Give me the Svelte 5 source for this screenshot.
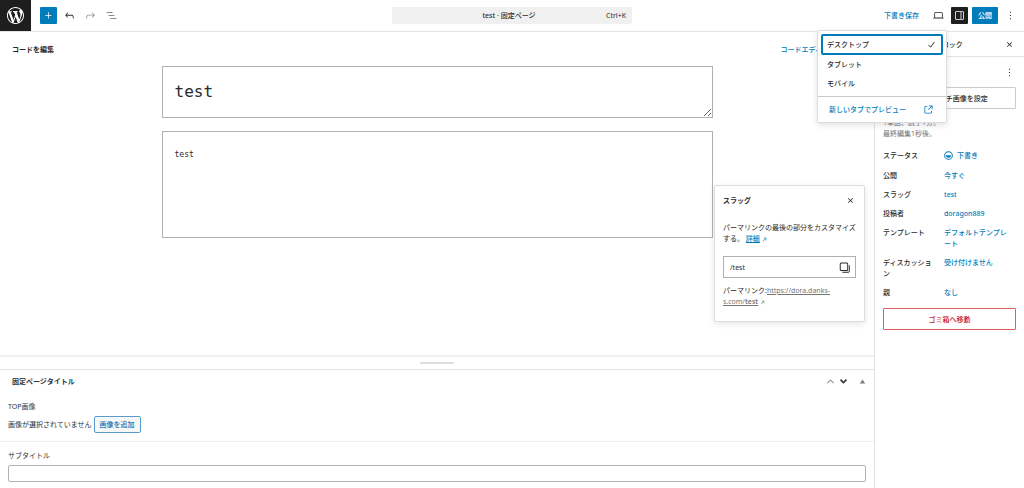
<script lang="ts">
  const icons = {
    plus: 'M11 12.5V17.5H12.5V12.5H17.5V11H12.5V6H11V11H6V12.5H11Z',
    undo: 'M18.3 11.7c-.6-.6-1.4-.9-2.3-.9H6.7l2.9-3.3-1.1-1-4.5 5L8.5 16l1-1-2.7-2.7H16c.5 0 .9.2 1.3.5 1 1 1 3.4 1 4.5v.3h1.5v-.2c0-1.5 0-4.3-1.5-5.7z',
    redo: 'M15.6 6.5l-1.1 1 2.9 3.3H8c-.9 0-1.7.3-2.3.9-1.4 1.5-1.4 4.2-1.4 5.6v.2h1.5v-.3c0-1.1 0-3.5 1-4.5.3-.3.7-.5 1.3-.5h9.2L14.5 15l1.1 1.1 4.6-4.6-4.6-5z',
    list: 'M3 6h11v1.5H3V6Zm3.5 5.5h11V13h-11v-1.5ZM21 17H10v1.5h11V17Z',
    laptop: 'M20.5 16h-.7V8c0-1.1-.9-2-2-2H6.2c-1.1 0-2 .9-2 2v8h-.7c-.8 0-1.5.7-1.5 1.5h20c0-.8-.7-1.5-1.5-1.5zM5.7 8c0-.3.2-.5.5-.5h11.6c.3 0 .5.2.5.5v7.6H5.7V8z',
    drawer: 'M18 4H6c-1.1 0-2 .9-2 2v12c0 1.1.9 2 2 2h12c1.1 0 2-.9 2-2V6c0-1.1-.9-2-2-2zm-4 14.5H6c-.3 0-.5-.2-.5-.5V6c0-.3.2-.5.5-.5h8v13zm4.5-.5c0 .3-.2.5-.5.5h-2.5v-13H18c.3 0 .5.2.5.5v12z',
    more: 'M13 19h-2v-2h2v2zm0-6h-2v-2h2v2zm0-6h-2V5h2v2z',
    check: 'M16.7 7.1l-6.3 8.5-3.3-2.5-.9 1.2 4.5 3.4L17.9 8z',
    external: 'M19.5 4.5h-7V6h4.44l-5.97 5.97 1.06 1.06L18 7.06v4.44h1.5v-7Zm-13 1a2 2 0 0 0-2 2v10a2 2 0 0 0 2 2h10a2 2 0 0 0 2-2v-3H17v3a.5.5 0 0 1-.5.5h-10a.5.5 0 0 1-.5-.5v-10a.5.5 0 0 1 .5-.5h3V5.5h-3Z',
    close: 'M12 13.06l3.712 3.713 1.061-1.06L13.061 12l3.712-3.712-1.06-1.06L12 10.938 8.288 7.227l-1.061 1.06L10.939 12l-3.712 3.712 1.06 1.061L12 13.061z',
    copy: 'M6.500 4.500h9a1.500 1.500 0 0 1 1.500 1.500v9a1.500 1.500 0 0 1-1.500 1.500h-9A1.500 1.500 0 0 1 5 15V6a1.500 1.500 0 0 1 1.500-1.500ZM3.200 5.500a2.800 2.800 0 0 1 2.800-2.800h10a2.800 2.800 0 0 1 2.800 2.800v10a2.800 2.800 0 0 1-2.800 2.800H6a2.800 2.800 0 0 1-2.800-2.800V5.500ZM20 8v10.700c0 .7-.6 1.300-1.300 1.300H8v1.700h11a2.700 2.700 0 0 0 2.700-2.700V8H20Z',
    up: 'M5.5 14.4L12 8l6.5 6.4-1.4 1.4L12 10.8l-5.1 5z',
    down: 'M18.5 9.6L12 16l-6.5-6.4 2-2L12 12.2l4.5-4.6z',
    triangle: 'M7 15.5L12 8.500l5 7z',
    arrow: 'M6 17L15 8H9V6.200h9V15h-1.800V9.200L7.200 18.200z',
    draft: 'M12 2.500a9.500 9.500 0 1 0 0 19 9.500 9.500 0 0 0 0-19ZM12 4.700a7.300 7.300 0 1 1 0 14.600 7.300 7.300 0 0 1 0-14.600ZM6.500 11.500h11a5.500 5.500 0 0 1-11 0Z',
  }

  const devices = ['デスクトップ', 'タブレット', 'モバイル']
  let device = $state('デスクトップ')
  let title = $state('test')
  let content = $state('test')
  let slug = $state('/test')
  let subtitle = $state('')

  const rows = [
    { label: 'ステータス', value: '下書き', icon: true },
    { label: '公開', value: '今すぐ' },
    { label: 'スラッグ', value: 'test', popover: true },
    { label: '投稿者', value: 'doragon889' },
    { label: 'テンプレート', value: 'デフォルトテンプレート' },
    { label: 'ディスカッション', value: '受け付けません' },
    { label: '親', value: 'なし' },
  ]
</script>

{#snippet icon(name: keyof typeof icons)}
  <svg class="icon {name}" viewBox="0 0 24 24" aria-hidden="true"><path fill-rule="evenodd" d={icons[name]} /></svg>
{/snippet}

<div class="editor">
  <header>
    <div class="tools">
      <a class="logo" href="#pages" aria-label="WordPress">
        <svg viewBox="0 0 20 20" aria-hidden="true"><path d="M20 10c0-5.51-4.49-10-10-10C4.48 0 0 4.49 0 10c0 5.52 4.48 10 10 10 5.51 0 10-4.48 10-10zM7.78 15.37L4.37 6.22c.55-.02 1.17-.08 1.17-.08.5-.06.44-1.13-.06-1.11 0 0-1.45.11-2.37.11-.18 0-.37 0-.58-.01C4.12 2.69 6.87 1.11 10 1.11c2.33 0 4.45.87 6.05 2.34-.68-.11-1.65.39-1.65 1.58 0 .74.45 1.36.9 2.1.35.61.55 1.36.55 2.46 0 1.49-1.4 5-1.4 5l-3.03-8.37c.54-.02.82-.17.82-.17.5-.05.44-1.25-.06-1.22 0 0-1.44.12-2.38.12-.87 0-2.33-.12-2.33-.12-.5-.03-.56 1.2-.06 1.22l.92.08 1.26 3.41zM17.41 10c.24-.64.74-1.87.43-4.25.7 1.29 1.05 2.71 1.05 4.25 0 3.29-1.73 6.24-4.4 7.78.97-2.59 1.94-5.2 2.92-7.78zM6.1 18.09C3.12 16.65 1.11 13.53 1.11 10c0-1.3.23-2.48.72-3.59C3.25 10.3 4.67 14.2 6.1 18.09zm4.03-6.63l2.58 6.98c-.86.29-1.76.45-2.71.45-.79 0-1.57-.11-2.29-.33.81-2.38 1.62-4.74 2.42-7.1z" /></svg>
      </a>
      <button class="tool primary" aria-label="ブロックを追加">{@render icon('plus')}</button>
      <button class="tool" aria-label="元に戻す">{@render icon('undo')}</button>
      <button class="tool muted" aria-label="やり直す">{@render icon('redo')}</button>
      <button class="tool outline" aria-label="リスト表示">{@render icon('list')}</button>
    </div>
    <button class="command">
      <span class="document">test · 固定ページ</span>
      <span>Ctrl+K</span>
    </button>
    <div class="actions">
      <button class="save">下書き保存</button>
      <div class="preview">
        <button class="tool" aria-label="表示" aria-expanded="true">{@render icon('laptop')}</button>
        <div class="menu">
          <div class="group">
            {#each devices as name}
              <button class="item" class:selected={device === name} onclick={() => (device = name)}>
                {name}
                {#if device === name}{@render icon('check')}{/if}
              </button>
            {/each}
          </div>
          <div class="group">
            <a class="item" href="#preview">新しいタブでプレビュー {@render icon('external')}</a>
          </div>
        </div>
      </div>
      <button class="tool dark" aria-label="設定">{@render icon('drawer')}</button>
      <button class="publish">公開</button>
      <button class="tool" aria-label="オプション">{@render icon('more')}</button>
    </div>
  </header>

  <div class="body">
    <main>
      <section class="code">
        <div class="code-bar">
          <h2>コードを編集</h2>
          <button class="link">コードエディターを終了</button>
        </div>
        <div class="fields">
          <textarea class="title" aria-label="タイトルを追加" bind:value={title}></textarea>
          <textarea class="content" aria-label="本文" bind:value={content}></textarea>
        </div>
      </section>

      <div class="resize"><span></span></div>

      <section class="meta">
        <div class="meta-head">
          <h2>固定ページタイトル</h2>
          <button class="faded" aria-label="上に移動">{@render icon('up')}</button>
          <button aria-label="下に移動">{@render icon('down')}</button>
          <button class="toggle" aria-label="パネルを切り替え">{@render icon('triangle')}</button>
        </div>
        <div class="field">
          <span class="name">TOP画像</span>
          <div class="image">
            <span>画像が選択されていません</span>
            <button>画像を追加</button>
          </div>
        </div>
        <div class="field">
          <label class="name" for="subtitle">サブタイトル</label>
          <input id="subtitle" type="text" bind:value={subtitle} />
        </div>
      </section>
    </main>

    <aside>
      <div class="tabs">
        <button>固定ページ</button>
        <button>ブロック</button>
        <button class="close" aria-label="設定を閉じる">{@render icon('close')}</button>
      </div>
      <div class="panel">
        <div class="panel-head">
          <h2>test</h2>
          <button aria-label="操作">{@render icon('more')}</button>
        </div>
        <button class="featured">アイキャッチ画像を設定</button>
        <p class="info">1単語、読了1分。<br />最終編集1秒後。</p>
        <div class="rows">
          {#each rows as row}
            <div class="row" class:status={row.icon}>
              <span>{row.label}</span>
              <button class="link">
                {#if row.icon}{@render icon('draft')}{/if}{row.value}
              </button>
              {#if row.popover}
                <div class="popover">
                  <div class="popover-head">
                    <h2>スラッグ</h2>
                    <button aria-label="閉じる">{@render icon('close')}</button>
                  </div>
                  <p>パーマリンクの最後の部分をカスタマイズする。 <a class="details" href="#details">詳細</a>{@render icon('arrow')}</p>
                  <div class="slug">
                    <input type="text" aria-label="スラッグ" bind:value={slug} />
                    <button aria-label="コピー">{@render icon('copy')}</button>
                  </div>
                  <p class="permalink">パーマリンク:<a href="#permalink">https://dora.danks-<wbr />s.com/<b>test</b></a>{@render icon('arrow')}</p>
                </div>
              {/if}
            </div>
          {/each}
        </div>
        <button class="trash">ゴミ箱へ移動</button>
      </div>
    </aside>
  </div>
</div>

<style>
  :global(body) {
    margin: 0;
  }

  .editor {
    display: flex;
    flex-direction: column;
    min-height: 100vh;
    background: #fff;
    color: #2a2a2a;
    font-family: "Noto Sans", "Noto Sans CJK JP", sans-serif;
    font-size: 7px;
    line-height: 11px;
  }

  .editor * {
    box-sizing: border-box;
  }

  h2,
  p {
    margin: 0;
    font-size: 7px;
  }

  h2 {
    font-weight: 600;
  }

  button,
  input,
  textarea {
    margin: 0;
    padding: 0;
    border: 0;
    background: none;
    color: inherit;
    font: inherit;
  }

  button {
    display: flex;
    align-items: center;
    justify-content: center;
    font-weight: 500;
    cursor: pointer;
  }

  a,
  .link {
    color: #007cba;
  }

  .icon {
    flex: none;
    width: 13px;
    height: 13px;
    fill: currentColor;
  }

  header {
    display: grid;
    grid-template-columns: 1fr 240px 1fr;
    align-items: center;
    height: 32px;
    border-bottom: 1px solid #e4e4e4;
  }

  .tools,
  .actions {
    display: flex;
    align-items: center;
    gap: 4px;
  }

  .logo {
    display: flex;
    align-items: center;
    justify-content: center;
    width: 31px;
    height: 31px;
    margin-right: 5px;
    background: #1e1e1e;
  }

  .logo svg {
    width: 17px;
    height: 17px;
    fill: #fff;
  }

  .tool {
    width: 17px;
    height: 17px;
    border-radius: 1px;
  }

  .primary {
    background: #007cba;
    color: #fff;
  }

  .dark {
    background: #1e1e1e;
    color: #fff;
  }

  .muted {
    color: #949494;
  }

  .outline {
    color: #6a6a6a;
  }

  .command {
    height: 17px;
    padding: 0 6px;
    border-radius: 2px;
    background: #f0f0f0;
    font-weight: 400;
  }

  .document {
    flex: 1;
    padding-left: 14px;
    font-weight: 500;
  }

  .actions {
    justify-content: flex-end;
    padding-right: 5px;
  }

  .save {
    height: 17px;
    padding: 0 7px;
    color: #007cba;
  }

  .publish {
    width: 26px;
    height: 17px;
    border-radius: 1px;
    background: #007cba;
    color: #fff;
  }

  .preview {
    position: relative;
  }

  .menu {
    position: absolute;
    z-index: 2;
    top: 23px;
    right: 0;
    width: 130px;
    border: 1px solid #ddd;
    border-radius: 2px;
    background: #fff;
    box-shadow: 0 2px 6px rgba(0, 0, 0, 0.12);
  }

  .group {
    padding: 3px;
  }

  .group + .group {
    border-top: 1px solid #ccc;
  }

  .item {
    display: flex;
    align-items: center;
    justify-content: space-between;
    width: 100%;
    height: 19px;
    padding: 0 6px;
    border-radius: 2px;
    font-weight: 500;
    text-decoration: none;
  }

  .selected {
    height: 21px;
    padding: 0 3px 0 4px;
    border: 2px solid #007cba;
  }

  a.item {
    padding: 0 8px;
  }

  .body {
    display: flex;
    flex: 1;
  }

  main {
    display: flex;
    flex: 1;
    flex-direction: column;
    min-width: 0;
  }

  .code {
    flex: 1;
  }

  .code-bar {
    display: flex;
    align-items: center;
    justify-content: space-between;
    height: 34px;
    padding: 0 17px 0 12px;
  }

  .fields {
    display: flex;
    flex-direction: column;
    gap: 13px;
    max-width: 551px;
    margin: 0 auto;
  }

  textarea {
    display: block;
    padding: 12px;
    border: 1px solid #b0b0b0;
    font-family: "DejaVu Sans Mono", monospace;
    resize: none;
  }

  .title {
    height: 52px;
    font-size: 16px;
    line-height: 26px;
    resize: vertical;
  }

  .content {
    height: 107px;
    padding-top: 16px;
    font-size: 8px;
    line-height: 13px;
  }

  .resize {
    display: flex;
    align-items: center;
    justify-content: center;
    height: 14px;
    border-top: 2px solid #f0f0f0;
  }

  .resize span {
    width: 34px;
    height: 2px;
    border-radius: 1px;
    background: #ddd;
  }

  .meta {
    border-top: 1px solid #e4e4e4;
    color: #2c3338;
  }

  .meta-head {
    display: flex;
    align-items: center;
    height: 23px;
    padding: 0 5px 0 12px;
  }

  .meta-head h2 {
    flex: 1;
  }

  .faded,
  .toggle {
    color: #949494;
  }

  .toggle {
    margin-left: 6px;
    color: #787c82;
  }

  .field {
    padding: 8px;
  }

  .field + .field {
    padding-bottom: 6px;
    border-top: 1px solid #eee;
  }

  .name {
    display: block;
    margin-bottom: 4px;
  }

  .image {
    display: flex;
    align-items: center;
    gap: 2px;
  }

  .image button {
    height: 17px;
    padding: 0 5px;
    border: 1px solid #5b9bcb;
    border-radius: 2px;
    background: #f6f7f7;
    color: #2271b1;
  }

  .field input {
    display: block;
    width: 100%;
    height: 17px;
    padding: 0 4px;
    border: 1px solid #b0b2b5;
    border-radius: 2px;
  }

  aside {
    width: 150px;
    border-left: 1px solid #e4e4e4;
  }

  .tabs {
    display: flex;
    align-items: center;
    gap: 17px;
    height: 25px;
    padding: 0 8px;
    border-bottom: 1px solid #e4e4e4;
  }

  .close {
    margin-left: auto;
  }

  .panel {
    padding: 8px;
  }

  .panel-head {
    display: flex;
    align-items: center;
    justify-content: space-between;
    height: 14px;
    margin-bottom: 8px;
  }

  .featured,
  .trash {
    width: 100%;
    height: 22px;
    border: 1px solid #ccc;
    border-radius: 1px;
  }

  .info {
    margin: 8px 0 7px;
    color: #757575;
  }

  .row {
    position: relative;
    display: grid;
    grid-template-columns: 50px 66px;
    align-items: start;
    gap: 11px;
    padding: 4px 0;
  }

  .row > span {
    font-weight: 500;
    word-break: break-all;
  }

  .row > .link {
    justify-content: flex-start;
    text-align: left;
    line-break: anywhere;
  }

  .status {
    padding-bottom: 5px;
  }

  .draft {
    width: 11px;
    height: 11px;
    margin: 0 3px 0 -1px;
  }

  .trash {
    margin-top: 6px;
    border-color: #dd6060;
    color: #cc1818;
  }

  .popover {
    position: absolute;
    z-index: 1;
    top: 0;
    right: calc(100% + 18px);
    width: 151px;
    padding: 8px 7px 14px 8px;
    border: 1px solid #ddd;
    border-radius: 2px;
    background: #fff;
    box-shadow: 0 2px 6px rgba(0, 0, 0, 0.1);
  }

  .popover-head {
    display: flex;
    align-items: center;
    justify-content: space-between;
    margin-bottom: 15px;
  }

  .popover .arrow {
    width: 7px;
    height: 7px;
    margin-left: 1px;
    vertical-align: middle;
    color: #007cba;
  }

  .details {
    font-weight: 500;
  }

  .slug {
    display: flex;
    align-items: center;
    height: 22px;
    margin: 12px 1px 7px 0;
    padding: 0 4px 0 6px;
    border: 1px solid #b0b0b0;
  }

  .slug input {
    flex: 1;
    min-width: 0;
  }

  .permalink a,
  .permalink .arrow {
    color: #757575;
  }

  .permalink b {
    font-weight: 600;
  }
</style>
